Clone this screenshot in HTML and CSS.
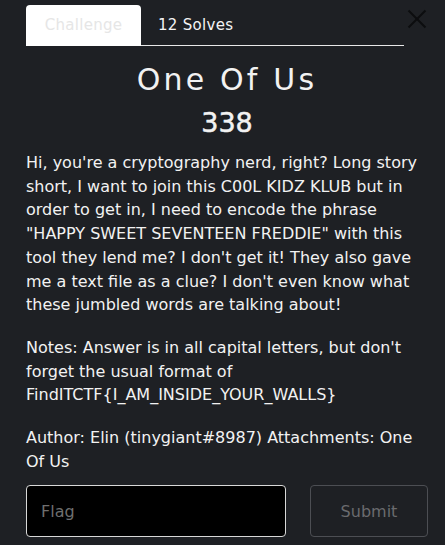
FILE: index.html
```html
<!DOCTYPE html>
<html lang="en">
<head>
<meta charset="utf-8">
<title>One Of Us</title>
<link rel="stylesheet" href="styles.css">
</head>
<body>
<div class="modal">
  <div class="tabs-row">
    <nav class="tabs">
      <a class="tab active">Challenge</a>
      <a class="tab">12 Solves</a>
    </nav>
    <div class="close" role="button" aria-label="Close"><span class="bar one"></span><span class="bar two"></span></div>
  </div>
  <h2 class="title">One Of Us</h2>
  <h3 class="value">338</h3>
  <div class="desc">
    <p>Hi, you're a cryptography nerd, right? Long story short, I want to join this C00L KIDZ KLUB but in order to get in, I need to encode the phrase "HAPPY SWEET SEVENTEEN FREDDIE" with this tool they lend me? I don't get it! They also gave me a text file as a clue? I don't even know what these jumbled words are talking about!</p>
    <p>Notes: Answer is in all capital letters, but don't forget the usual format of FindITCTF{I_AM_INSIDE_YOUR_WALLS}</p>
    <p>Author: Elin (tinygiant#8987) Attachments: One Of Us</p>
  </div>
  <form class="submit-row">
    <input class="flag" type="text" placeholder="Flag">
    <button class="submit" type="button">Submit</button>
  </form>
</div>
</body>
</html>
```
FILE: styles.css
```css
html, body {
  margin: 0;
  padding: 0;
  background: #1e2024;
}
body {
  font-family: "DejaVu Sans", sans-serif;
  color: #f2f2f2;
}
.modal {
  padding: 5px 17px 0 26px;
}
.tabs-row {
  display: flex;
  align-items: flex-start;
}
.tabs {
  display: flex;
  width: 378px;
  border-bottom: 1px solid #e8e8e8;
}
.tab {
  display: block;
  height: 40px;
  line-height: 40px;
  padding: 0 17px;
  font-size: 15px;
  letter-spacing: 0.3px;
  color: #f4f4f4;
  border-radius: 4px 4px 0 0;
}
.tab.active {
  box-sizing: border-box;
  width: 115px;
  text-align: center;
  padding: 0;
  background: #ffffff;
  color: #e6e6e6;
  margin-bottom: -1px;
  height: 41px;
}
.close {
  position: relative;
  width: 20px;
  height: 20px;
  margin: 4px 0 0 3px;
}
.bar {
  position: absolute;
  left: -2px;
  top: 9px;
  width: 24px;
  height: 2px;
  background: #0c0d0f;
}
.bar.one { transform: rotate(45deg); }
.bar.two { transform: rotate(-45deg); }
.title {
  margin: 16px 0 0;
  text-align: center;
  font-size: 30px;
  font-weight: normal;
  letter-spacing: 3.2px;
  line-height: 36px;
}
.value {
  margin: 8px 0 0;
  text-align: center;
  font-size: 27px;
  font-weight: normal;
  line-height: 34px;
  -webkit-text-stroke: 0.5px #f2f2f2;
}
.desc {
  margin-top: 11px;
  font-size: 16px;
  line-height: 23.7px;
}
.desc p {
  margin: 0 0 19px;
}
.desc p:last-child {
  margin-bottom: 0;
}
.submit-row {
  display: flex;
  gap: 24px;
  margin-top: 12px;
}
.flag {
  box-sizing: border-box;
  width: 260px;
  height: 52px;
  background: #000;
  border: 1px solid #d8d8d8;
  border-radius: 4px;
  padding: 0 14px;
  font-family: inherit;
  font-size: 16px;
  color: #ddd;
}
.flag::placeholder {
  color: #6f6f6f;
}
.submit {
  box-sizing: border-box;
  width: 118px;
  height: 52px;
  background: transparent;
  border: 1px solid #4c4e53;
  border-radius: 4px;
  font-family: inherit;
  font-size: 16px;
  color: #6a6b6e;
}
```
